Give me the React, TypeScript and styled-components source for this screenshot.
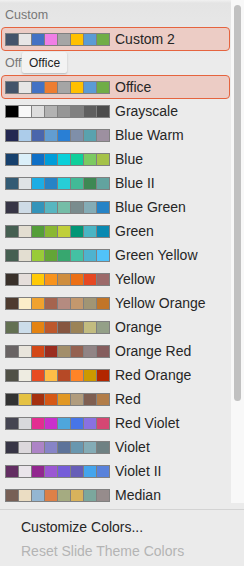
import React from 'react';
import styled, { createGlobalStyle } from 'styled-components';

const GlobalStyle = createGlobalStyle`
  html, body {
    margin: 0;
    padding: 0;
    width: 244px;
    height: 566px;
    overflow: hidden;
    background: #ebebeb;
  }
  * {
    box-sizing: border-box;
  }
`;

type Theme = { name: string; colors: string[] };

const CUSTOM_THEMES: Theme[] = [
  { name: 'Custom 2', colors: ['#44546a', '#e7e6e6', '#4472c4', '#f07fe6', '#a5a5a5', '#ffc000', '#5b9bd5', '#70ad47'] },
];

const OFFICE_THEMES: Theme[] = [
  { name: 'Office', colors: ['#44546a', '#e7e6e6', '#4472c4', '#ed7d31', '#a5a5a5', '#ffc000', '#5b9bd5', '#70ad47'] },
  { name: 'Grayscale', colors: ['#000000', '#f8f8f8', '#dddddd', '#b2b2b2', '#969696', '#808080', '#5f5f5f', '#4d4d4d'] },
  { name: 'Blue Warm', colors: ['#242852', '#acccea', '#4a66ac', '#629dd1', '#297fd5', '#7f8fa9', '#5aa2ae', '#9d90a0'] },
  { name: 'Blue', colors: ['#17406d', '#dbeff9', '#0f6fc6', '#009dd9', '#0bd0d9', '#10cf9b', '#7cca62', '#a5c249'] },
  { name: 'Blue II', colors: ['#335b74', '#dfe3e5', '#1cade4', '#2683c6', '#27ced7', '#42ba97', '#3e8853', '#62a39f'] },
  { name: 'Blue Green', colors: ['#373545', '#cedbe6', '#3494ba', '#58b6c0', '#75bda7', '#7a8c8e', '#84acb6', '#2683c6'] },
  { name: 'Green', colors: ['#455f51', '#e3ded1', '#549e39', '#8ab833', '#c0cf3a', '#029676', '#4ab5c4', '#0989b1'] },
  { name: 'Green Yellow', colors: ['#455f51', '#e3ded1', '#99cb38', '#63a537', '#37a76f', '#44c1a3', '#4eb3cf', '#51c3f9'] },
  { name: 'Yellow', colors: ['#39302a', '#e5dedb', '#ffca08', '#f8931d', '#ce8d3e', '#ec7016', '#e64823', '#9c6a6a'] },
  { name: 'Yellow Orange', colors: ['#4e3b30', '#fbeec9', '#f0a22e', '#a5644e', '#b58b80', '#c3986d', '#a19574', '#c17529'] },
  { name: 'Orange', colors: ['#637052', '#ccddea', '#e48312', '#bd582c', '#865640', '#9b8357', '#c2bc80', '#94a088'] },
  { name: 'Orange Red', colors: ['#696464', '#e9e5dc', '#d34817', '#9b2d1f', '#a28e6a', '#956251', '#918485', '#855d5d'] },
  { name: 'Red Orange', colors: ['#505046', '#eeece1', '#e84c22', '#ffbd47', '#b64926', '#ff8427', '#cc9900', '#b22600'] },
  { name: 'Red', colors: ['#323232', '#e5c243', '#a5300f', '#d55816', '#e19825', '#b19c7d', '#7f5f52', '#b27d49'] },
  { name: 'Red Violet', colors: ['#454551', '#d8d9dc', '#e32d91', '#c830cc', '#4ea6dc', '#4775e7', '#8971e1', '#d54773'] },
  { name: 'Violet', colors: ['#373545', '#dcd8dc', '#ad84c6', '#8784c7', '#5d739a', '#6997af', '#84acb6', '#6f8183'] },
  { name: 'Violet II', colors: ['#632e62', '#eae5eb', '#92278f', '#9b57d3', '#755dd9', '#665eb8', '#45a5ed', '#5982db'] },
  { name: 'Median', colors: ['#775f55', '#ebddc3', '#94b6d2', '#dd8047', '#a5ab81', '#d8b25c', '#7ba79d', '#968c8c'] },
];

const SELECTED = ['Custom 2', 'Office'];

const Panel = styled.div`
  width: 244px;
  height: 566px;
  display: flex;
  flex-direction: column;
  background: #ebebeb;
  font-family: 'Liberation Sans', Arial, sans-serif;
  color: #262626;
`;

const ScrollArea = styled.div`
  flex: none;
  height: 503px;
  display: flex;
  overflow: hidden;
`;

const List = styled.div`
  position: relative;
  width: 231px;
  padding-top: 3px;
  background: linear-gradient(#f1f1f1 0, #e4e4e4 3px, #ebebeb 60px);
`;

const GroupLabel = styled.div`
  height: 24px;
  display: flex;
  align-items: center;
  padding-left: 5px;
  font-size: 12.5px;
  color: #777777;
`;

const ThemeRow = styled.div<{ $selected: boolean }>`
  height: 24px;
  width: 229px;
  margin-left: 1px;
  display: flex;
  align-items: center;
  padding-left: 3px;
  border: 1px solid ${(p) => (p.$selected ? '#e5643f' : 'transparent')};
  border-radius: 4px;
  background: ${(p) => (p.$selected ? '#ecccc5' : 'transparent')};
`;

const Strip = styled.div`
  display: flex;
  gap: 1px;
  border: 1px solid #808080;
  background: #808080;
`;

const Cell = styled.span<{ $color: string }>`
  width: 12px;
  height: 11px;
  background: ${(p) => p.$color};
`;

const ThemeName = styled.span`
  margin-left: 5px;
  font-size: 14px;
  color: #262626;
  white-space: nowrap;
`;

const Tooltip = styled.div`
  position: absolute;
  left: 22px;
  top: 52px;
  width: 45px;
  height: 21px;
  display: flex;
  align-items: center;
  justify-content: center;
  background: #f3f3f3;
  border-radius: 2px;
  box-shadow: 0 1px 2px rgba(0, 0, 0, 0.22);
  font-size: 12px;
  color: #222222;
`;

const Track = styled.div`
  width: 13px;
  padding: 5px 3px 0;
  background: #f8f8f8;
`;

const Thumb = styled.div`
  width: 7px;
  height: 396px;
  border-radius: 4px;
  background: #c1c1c1;
`;

const Divider = styled.div`
  margin-top: 6px;
  height: 1px;
  background: #d3d3d3;
`;

const Footer = styled.div`
  padding-top: 5px;
`;

const FooterItem = styled.div<{ $disabled?: boolean }>`
  height: 24px;
  display: flex;
  align-items: center;
  padding-left: 21px;
  font-size: 14px;
  color: ${(p) => (p.$disabled ? '#b4b4b4' : '#262626')};
`;

const ThemeItem = ({ theme }: { theme: Theme }) => (
  <ThemeRow $selected={SELECTED.includes(theme.name)}>
    <Strip>
      {theme.colors.map((c, i) => (
        <Cell key={i} $color={c} />
      ))}
    </Strip>
    <ThemeName>{theme.name}</ThemeName>
  </ThemeRow>
);

const App = (): JSX.Element => (
  <React.Fragment>
    <GlobalStyle />
    <Panel>
      <ScrollArea>
        <List>
          <GroupLabel>Custom</GroupLabel>
          {CUSTOM_THEMES.map((t) => (
            <ThemeItem key={t.name} theme={t} />
          ))}
          <GroupLabel>Office</GroupLabel>
          {OFFICE_THEMES.map((t) => (
            <ThemeItem key={t.name} theme={t} />
          ))}
          <Tooltip>Office</Tooltip>
        </List>
        <Track>
          <Thumb />
        </Track>
      </ScrollArea>
      <Divider />
      <Footer>
        <FooterItem>Customize Colors...</FooterItem>
        <FooterItem $disabled>Reset Slide Theme Colors</FooterItem>
      </Footer>
    </Panel>
  </React.Fragment>
);

export default App;
